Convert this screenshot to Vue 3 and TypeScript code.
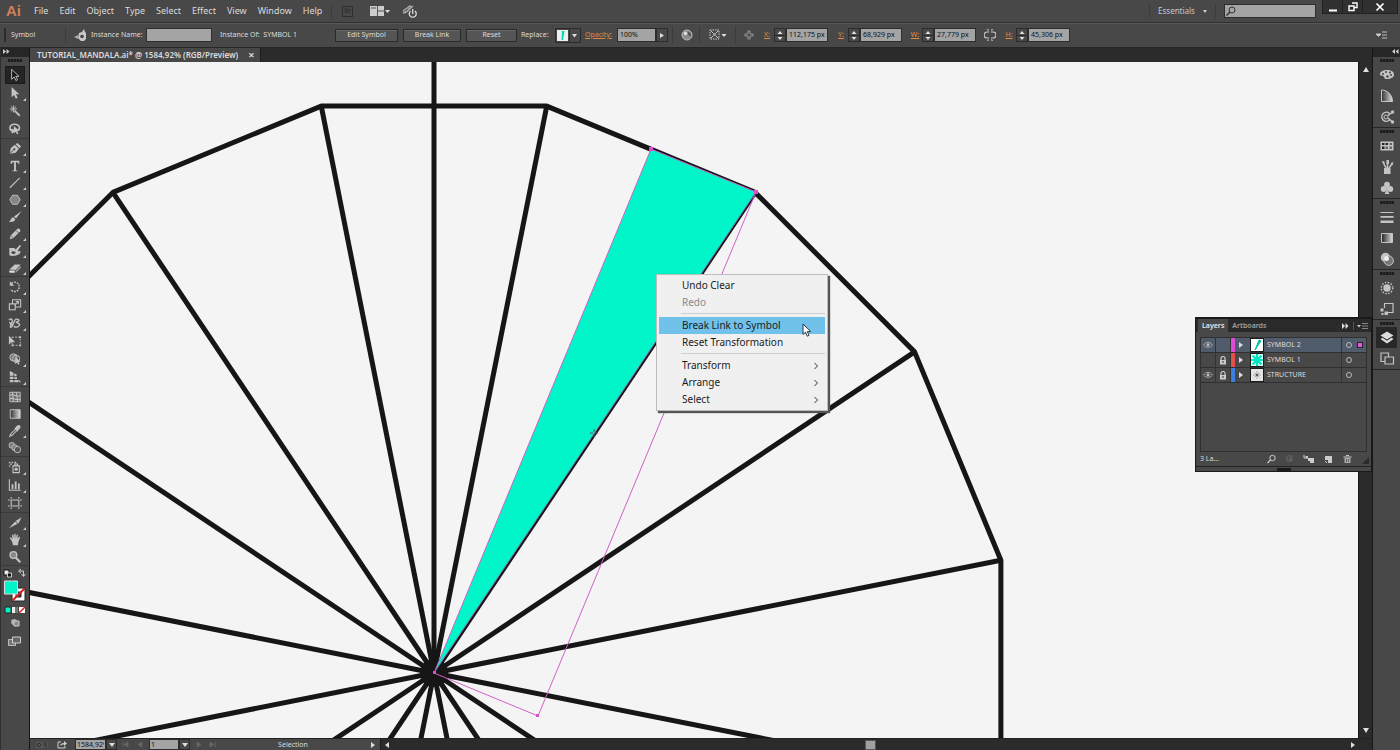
<script setup lang="ts">
import { ref } from 'vue'

interface Tool { name: string; art: string; more?: boolean }
interface Layer { name: string; color: string; visible: boolean; locked: boolean; selected: boolean; thumb: string }
interface Field { id: string; label: string; value: string }

const G = '#c4c4c4'
const s = (d: string, w = 1.2): string => `<path d="${d}" fill="none" stroke="${G}" stroke-width="${w}"/>`
const f = (d: string, c = G): string => `<path d="${d}" fill="${c}"/>`

const toolGroups: { roomy: boolean; tools: Tool[] }[] = [
  { roomy: true, tools: [
    { name: 'Selection', art: `<path d="M4 1.5v11l2.8-2.6 2 4 1.8-1-2-3.7h3.6z" fill="#151515" stroke="${G}" stroke-width="1"/>` },
    { name: 'Direct Selection', art: f('M4 1v11.500l2.700-2.500 2 4 2-1-2-3.800h3.800z'), more: true },
    { name: 'Magic Wand', art: s('M7.500 7.500l5.500 5.500', 2) + s('M6 1.500v8M2 5.500h8M3.200 2.700l5.600 5.600M8.800 2.700l-5.600 5.600', 1) },
    { name: 'Lasso', art: s('M5 10C1 9 1 3 6.500 2.500c6-.5 7.500 4 5 6.500M4 8.500c3-.5 3 2.500 0 3.500', 1.700) + f('M6.500 4.500v8l2-1.800 1.500 3 1.500-.800-1.400-2.800h2.700z') },
  ] },
  { roomy: false, tools: [
    { name: 'Pen', art: f('M2 13l1-6 4.500-4 4.500 4.500-3.500 4.500z') + f('M8.500 2.500l2-1.500 4 4-1.700 2z') + '<path d="M2.500 12.500l4-4" stroke="#444"/><circle cx="7" cy="8" r="1.200" fill="#444"/>', more: true },
    { name: 'Type', art: f('M3 2h9.500v3.500h-1c-.2-1.500-.7-2-2.700-2v8c0 1 .4 1.200 1.700 1.300v.7H5v-.7c1.300-.1 1.700-.3 1.700-1.300v-8c-2 0-2.500.5-2.700 2H3z'), more: true },
    { name: 'Line Segment', art: s('M2 13L13 2'), more: true },
    { name: 'Polygon', art: `<path d="M5 2.500h5.500l3 5-3 5H5l-3-5z" fill="#858585" stroke="${G}"/>`, more: true },
    { name: 'Paintbrush', art: f('M15 1L9 9.500 6.500 7.500z') + f('M5.500 8l2.500 2c0 3-3.500 3.700-7 3.200 2-.800 2-4.700 4.500-5.200z') },
    { name: 'Pencil', art: f('M2 13.500l1-4L10.500 2c1.500-1 4 1 3 2.800L6 12.300z') + '<path d="M3.500 9.500l2.200 2.200M9 4l2.500 2.500" stroke="#555"/>', more: true },
    { name: 'Blob Brush', art: f('M1.500 4.500h5.500l1.500 1.500 4.500-5 1.500 1-3.500 5v1c1 0 2-1 3 .5-1 4.500-9.500 5.500-12.500 4z') + '<path d="M3.500 9c2-2.500 4 .5 5-.5-.5 4-4 3-5 .5z" fill="#444"/>', more: true },
    { name: 'Eraser', art: f('M1.500 9.500L7.500 4h6.500l-5.500 6z') + f('M1.500 10.500h6v2.500h-5c-1 0-1.500-1.500-1-2.500z', '#ddd') + f('M8.500 10.500l5.500-5.500v3L8.500 13z', '#999'), more: true },
  ] },
  { roomy: true, tools: [
    { name: 'Rotate', art: `<path d="M4 3.500a5.200 5.200 0 1 1-1 7" fill="none" stroke="${G}" stroke-width="1.500" stroke-dasharray="2 1"/>` + f('M2 1.500v5h5z'), more: true },
    { name: 'Scale', art: s('M1.500 6.500h6.500v6.500H1.500zM5 6V2h9v8h-5.500M7 8.500l4.500-4.500M8.500 3.800h3v3'), more: true },
    { name: 'Width', art: s('M1 4.500c3-3 5 0 3 3.500s-2 3-1 4.500c3 0 3-9 6.500-9 3 0 4 2 0 3-2 1 5 1 3 4-1 2-4 2.500-6 1M1.500 7l4 4', 1.500), more: true },
    { name: 'Free Transform', art: `<path d="M4.500 3.500h9v9h-9z" fill="none" stroke="${G}" stroke-dasharray="2 1.500"/>` + f('M1 2v9.500l2.700-2.500 4.300.2z') + f('M12.500 2.500h2v2h-2zM12.500 11.500h2v2h-2zM4 11.500h2v2H4z') },
    { name: 'Shape Builder', art: `<circle cx="6" cy="6" r="4" fill="#777" stroke="${G}"/><circle cx="9" cy="7.500" r="4" fill="none" stroke="${G}"/>` + f('M8 5v8.500l2-1.800 1.400 2.300 1.400-.8-1.300-2.400H14z'), more: true },
    { name: 'Perspective Grid', art: f('M2 1l4 2v3.500H2zM2 7.500h4V10H2zM2 11h4v2.500H2zM7 3.500l2.500 1.500v2H7zM7 8h3v2H7zM7 11h3.500l1.500 2.500H7zM11 11h1.500l2 2.500H13z'), more: true },
  ] },
  { roomy: false, tools: [
    { name: 'Mesh', art: `<path d="M2 2.500h11.500v10.500H2z" fill="#666" stroke="${G}"/>` + s('M2 6c4-3 7 3 11.500 0M2 10c4-3 7 3 11.500 0M5.500 2.500c-2 4 2 7 0 10.500M10 2.500c-2 4 2 7 0 10.500') },
    { name: 'Gradient', art: `<defs><linearGradient id="g-tool"><stop offset="0" stop-color="#333"/><stop offset="1" stop-color="#ddd"/></linearGradient></defs><path d="M2.500 3h11v9.500h-11z" fill="url(#g-tool)" stroke="${G}"/>` },
    { name: 'Eyedropper', art: s('M2 13.500l1-2.500L8.500 5.500 10 7l-5.500 5.500z') + f('M7 4.500l1.500-.7C10 1.500 12 .5 13.500 1.800c1 1.500 0 3.200-2 4.700L11 8.500z'), more: true },
    { name: 'Blend', art: `<rect x="1.500" y="2" width="5.500" height="5.500" rx="1" fill="#777" stroke="${G}"/><circle cx="7.500" cy="7.500" r="3.300" fill="#777" stroke="${G}"/><circle cx="10.500" cy="9.500" r="3.500" fill="#555" stroke="${G}"/>` },
  ] },
  { roomy: true, tools: [
    { name: 'Symbol Sprayer', art: s('M5.500 6.500h7v7.500h-7zM7.500 4.500h3v2h-3z') + `<circle cx="9" cy="10.200" r="1.800" fill="${G}"/>` + f('M1 2h1.500v1.500H1zM4 2h1.500v1.500H4zM2.500 4H4v1.500H2.500zM7 2h2v1.500H7zM1 6h1.500v1.500H1z'), more: true },
    { name: 'Column Graph', art: s('M1.500 1.500v12H14') + f('M4 7h2v5.500H4zM7.500 4h2v8.500h-2zM11 6h2v6.500h-2z'), more: true },
    { name: 'Artboard', art: s('M3.500 4.500h8.500v6.500H3.500zM3.500 1v2M12 1v2M3.500 12.500v2M12 12.500v2M0 4.500h2M13.500 4.500h2M0 11h2M13.500 11h2') },
  ] },
  { roomy: false, tools: [
    { name: 'Slice', art: f('M1 13.500L8 6l2.500 2.500z') + f('M8.500 5.500L15 1.500 11.500 8.500z'), more: true },
    { name: 'Hand', art: f('M4 8.500L2 5.500c0-1 1-1.200 1.500-.5l1.500 2L4.500 2.500c0-1 1.500-1 1.600 0L6.800 6 7 1.500c0-1 1.500-1 1.500 0L8.600 6l1-3.800c.2-1 1.600-.7 1.400.3l-.7 4 1.700-2.200c.7-.7 1.700 0 1.200 1L11.500 10l-.5 3.500H5.500L5 11z'), more: true },
    { name: 'Zoom', art: `<circle cx="6" cy="5.500" r="3.700" fill="#888" stroke="${G}" stroke-width="1.500"/>` + s('M8.800 8.500L13.500 13.500', 2.500) },
  ] },
]

const dockGroups: Tool[][] = [
  [
    { name: 'Color', art: `<path d="M8 3c-4 0-7 1.700-7 4.300 0 2 2.500 1.200 4 2.200.800 1-.5 2.500 3 2.500 4 0 7-1.700 7-4.500S12 3 8 3z" fill="${G}"/><g fill="#444"><circle cx="4" cy="7" r="1"/><circle cx="7" cy="5" r="1"/><circle cx="11" cy="5.500" r="1"/><circle cx="12" cy="8" r="1"/><circle cx="8.500" cy="9.500" r="1.200"/></g>` },
    { name: 'Color Guide', art: '<defs><linearGradient id="g-guide"><stop offset="0" stop-color="#333"/><stop offset="1" stop-color="#ddd"/></linearGradient></defs><path d="M2.500 2v11.500h11C13.500 7 8.500 2 2.500 2z" fill="url(#g-guide)" stroke="#c4c4c4"/>' },
    { name: 'Kuler', art: s('M10.500 11a4.500 4.500 0 1 1 0-6.500M9 6.500l4-3M9 9l4 3.500', 1.500) + `<circle cx="7" cy="8" r="2" fill="none" stroke="${G}"/><circle cx="13.500" cy="3" r="1.700" fill="${G}"/><circle cx="13.500" cy="13" r="1.700" fill="${G}"/>` },
  ],
  [
    { name: 'Swatches', art: f('M1.500 3.500h13v9h-13z') + '<path d="M3 5h2.500v2H3zM6.500 5H9v2H6.500zM3 8.500h2.500v2.500H3z" fill="#222"/><path d="M10.500 5H13v2h-2.500zM6.500 8.500H9v2.500H6.500zM10.500 8.500H13v2.500h-2.500z" fill="#666"/>' },
    { name: 'Brushes', art: f('M5 9h6.500v6H5z') + s('M7 9L4 3M8.500 9V3M10 9l3-4', 1.500) + f('M2.500 2l3 .5v3zM7.500 1h2.500v4H7.500zM11.500 4l3-1-1 3.500z') },
    { name: 'Symbols', art: `<circle cx="8" cy="4.700" r="2.900" fill="${G}"/><circle cx="4.700" cy="9" r="2.900" fill="${G}"/><circle cx="11.300" cy="9" r="2.900" fill="${G}"/>` + f('M7.200 6h1.600v5l1.700 3h-5l1.700-3z') },
  ],
  [
    { name: 'Stroke', art: f('M1.500 3h13v1h-13zM1.500 7h13v1.700h-13zM1.500 11.500h13V14h-13z') },
    { name: 'Gradient', art: `<defs><linearGradient id="g-dock"><stop offset="0" stop-color="#222"/><stop offset="1" stop-color="#ddd"/></linearGradient></defs><path d="M2.500 3.500h11v9h-11z" fill="url(#g-dock)" stroke="${G}"/>` },
    { name: 'Transparency', art: `<circle cx="6.500" cy="6.500" r="4.700" fill="${G}"/><circle cx="9.700" cy="9.700" r="4.700" fill="#777" stroke="${G}"/><circle cx="7.500" cy="7.500" r="2.500" fill="#eee"/>` },
  ],
  [
    { name: 'Appearance', art: `<circle cx="8" cy="8" r="3.700" fill="${G}"/><circle cx="8" cy="8" r="5.700" fill="none" stroke="${G}" stroke-width="1.400" stroke-dasharray="1.500 1.500"/>` },
    { name: 'Graphic Styles', art: s('M5.500 7V2.500H14v9H9') + f('M1.500 7.500h3v3h-3zM5.500 10.500h3.500V14H5.500zM2.500 12h2v2h-2z') },
  ],
  [
    { name: 'Layers', art: f('M8 1.500l6.500 4L8 9.500l-6.500-4z', '#ddd') + f('M1.500 9l2-1.200L8 10.700l4.500-2.900 2 1.200L8 13.500z', '#ddd') },
    { name: 'Artboards', art: s('M2 2h7.500v8.500H2z') + '<path d="M6 6h8.500v7H6z" fill="#484848" stroke="#c4c4c4" stroke-width="1.200"/>' },
  ],
]

const menus = ['File', 'Edit', 'Object', 'Type', 'Select', 'Effect', 'View', 'Window', 'Help']
const fields = ref<Field[]>([
  { id: 'x', label: 'X:', value: '112,175 px' },
  { id: 'y', label: 'Y:', value: '68,929 px' },
  { id: 'w', label: 'W:', value: '27,779 px' },
  { id: 'h', label: 'H:', value: '45,306 px' },
])
const instanceName = ref('')
const opacity = ref('100%')
const search = ref('')
const zoomLevel = ref('1584,92%')
const artboard = ref('1')

const layers = ref<Layer[]>([
  { name: 'SYMBOL 2', color: '#e04bd8', visible: true, locked: false, selected: true, thumb: '<path d="M8 1l2 .800L4 11z" fill="#00b894" stroke="#00c9a4"/>' },
  { name: 'SYMBOL 1', color: '#e2504a', visible: false, locked: true, selected: false, thumb: '<path d="M0 0h12v12H0z" fill="#d8fff6"/><path d="M6 0v12M0 6h12M1.500 1.500l9 9M10.500 1.500l-9 9" stroke="#00e6c0" stroke-width="2.200"/>' },
  { name: 'STRUCTURE', color: '#3b7fe0', visible: true, locked: true, selected: false, thumb: '<path d="M0 0h12v12H0z" fill="#e4e4e4"/><path d="M6 2v8M2 6h8M3.500 3.500l5 5M8.500 3.500l-5 5" stroke="#999" stroke-width=".7"/><circle cx="6" cy="6" r="1.200" fill="#555"/>' },
])

const cx = 434
const cy = 673
const radius = 578
const vertices = Array.from({ length: 16 }, (_, i) => {
  const a = ((11.25 + 22.5 * i) * Math.PI) / 180
  return { x: cx + radius * Math.cos(a), y: cy - radius * Math.sin(a) }
})
const outline = vertices.map((v) => `${v.x},${v.y}`).join(' ')
</script>

<template>
  <div class="app">
    <header class="menubar">
      <span class="logo">Ai</span>
      <nav class="menus"><button v-for="m in menus" :key="m" type="button">{{ m }}</button></nav>
      <span class="rule bridge-rule"></span>
      <button class="bridge" type="button">Br</button>
      <button class="arrange" type="button" aria-label="Arrange documents">
        <svg width="20" height="12" viewBox="0 0 20 12"><path d="M0 1h14v10H0z" fill="#ccc" /><path d="M7.500 1v10M8 6h6M1 3h5" stroke="#555" /><path d="M15 5h5l-2.500 3z" fill="#ddd" /></svg>
      </button>
      <button class="gpu" type="button" aria-label="GPU preview">
        <svg width="16" height="14" viewBox="0 0 16 14"><path d="M1 7l7-5 1 1-3 3M3 9l8-7M1 9l5-2" stroke="#aaa" stroke-width="1.500" fill="none" /><path d="M8.500 7a3.500 3.500 0 1 0 4.500 0M10.700 5v5" stroke="#ddd" stroke-width="1.300" fill="none" /></svg>
      </button>
      <span class="grow"></span>
      <span class="rule"></span>
      <button class="essentials" type="button">Essentials <i></i></button>
      <span class="rule"></span>
      <label class="search">
        <svg width="12" height="12" viewBox="0 0 12 12"><circle cx="7" cy="5" r="3" fill="none" stroke="#333" /><path d="M5 7l-3.500 3.500" stroke="#333" stroke-width="1.500" /></svg>
        <input v-model="search" type="text" aria-label="Search" />
      </label>
      <div class="window-buttons">
        <button type="button" aria-label="Minimize"><svg width="10" height="10" viewBox="0 0 10 10"><path d="M1 8.500h8" stroke="#fff" stroke-width="2" /></svg></button>
        <button type="button" aria-label="Restore"><svg width="10" height="10" viewBox="0 0 10 10"><path d="M4 1h5v4.500H6.500M1 4h5v4.500H1z" stroke="#fff" stroke-width="1.400" fill="none" /></svg></button>
        <button class="close" type="button" aria-label="Close"><svg width="10" height="10" viewBox="0 0 10 10"><path d="M1.500 1.500l7 7M8.500 1.500l-7 7" stroke="#fff" stroke-width="1.700" /></svg></button>
      </div>
    </header>

    <section class="controlbar">
      <span class="bar-grip"></span>
      <span class="kind">Symbol</span>
      <span class="rule"></span>
      <svg class="symbol-icon" width="14" height="12" viewBox="0 0 14 12"><path d="M5 4l3-1 2-3 1 3 1 1v6l-2 2H7L4 9z" fill="#c8c8c8" /><circle cx="8" cy="7.500" r="1.800" fill="#444" /><path d="M0 8l4-2v4z" fill="#aaa" /></svg>
      <label class="name-label" for="instance">Instance Name:</label>
      <input id="instance" v-model="instanceName" class="instance" type="text" />
      <span class="instance-of">Instance Of:&nbsp; SYMBOL 1</span>
      <div class="actions">
        <button type="button">Edit Symbol</button>
        <button type="button">Break Link</button>
        <button type="button">Reset</button>
      </div>
      <span class="replace-label">Replace:</span>
      <button class="replace" type="button" aria-label="Replace symbol">
        <svg width="24" height="13" viewBox="0 0 24 13"><path d="M1 1h11v11H1z" fill="#eee" /><path d="M6 2h2.500L7 11H5.500z" fill="#00d9b0" /><path d="M13.500 0v13" stroke="#2b2b2b" /><path d="M16 5h5l-2.500 3.500z" fill="#ddd" /></svg>
      </button>
      <label class="hot" for="opacity">Opacity:</label>
      <span class="stepper opacity">
        <input id="opacity" v-model="opacity" type="text" />
        <button type="button" aria-label="Opacity slider"><svg width="8" height="11" viewBox="0 0 8 11"><path d="M2 3l4 2.500L2 8z" fill="#ddd" /></svg></button>
      </span>
      <span class="rule"></span>
      <svg class="ball" width="12" height="12" viewBox="0 0 12 12"><circle cx="6" cy="6" r="5" fill="#8c8c8c" stroke="#bbb" /><path d="M6.500 2.500a4 4 0 0 1 3.500 5L7 6z" fill="#555" /><circle cx="4.500" cy="4.500" r="1.800" fill="#ddd" /></svg>
      <span class="rule"></span>
      <svg class="align" width="18" height="12" viewBox="0 0 18 12"><path d="M1 1h9v9H1z" fill="none" stroke="#ccc" stroke-dasharray="1.500 1" /><path d="M4 4h3v3H4z" fill="#999" /><path d="M2 2l2 2M9 2L7 4M2 9l2-2M9 9L7 7" stroke="#ccc" /><path d="M12.500 5h5L15 8z" fill="#ddd" /></svg>
      <span class="rule"></span>
      <svg class="origin" width="10" height="10" viewBox="0 0 10 10"><path d="M4 1h2v3h3v2H6v3H4V6H1V4h3z" fill="none" stroke="#aaa" stroke-width=".8" /></svg>
      <template v-for="item in fields" :key="item.id">
        <svg v-if="item.id === 'h'" class="link" width="12" height="12" viewBox="0 0 12 12"><path d="M5 3H3a2.500 2.500 0 0 0 0 6h2M7 3h2a2.500 2.500 0 0 1 0 6H7M3.500 0l1 1.500M8.500 0l-1 1.500M3.500 12l1-1.500M8.500 12l-1-1.500" fill="none" stroke="#ccc" stroke-width="1.200" /></svg>
        <label class="hot coord" :for="item.id">{{ item.label }}</label>
        <span class="stepper">
          <button type="button" :aria-label="'Step ' + item.label"><svg width="10" height="11" viewBox="0 0 10 11"><path d="M2.500 4L5 1l2.500 3zM2.500 7h5L5 10z" fill="#ddd" /><path d="M0 5.500h10" stroke="#2d2d2d" /></svg></button>
          <input :id="item.id" v-model="item.value" type="text" />
        </span>
      </template>
      <span class="grow"></span>
      <button class="bar-menu" type="button" aria-label="Panel menu"><svg width="12" height="10" viewBox="0 0 12 10"><path d="M0 4h5L2.500 6.500zM6 2h5M6 5h5M6 8h5" fill="#ccc" stroke="#ccc" stroke-width=".9" /></svg></button>
    </section>

    <div class="workspace">
      <aside class="tools">
        <div class="tools-head"><svg width="7" height="5" viewBox="0 0 7 5"><path d="M0 0l3 2.500L0 5zM3.500 0l3 2.500L3.500 5z" fill="#ccc" /></svg></div>
        <div class="grip"></div>
        <div v-for="(group, gi) in toolGroups" :key="gi" class="tool-group" :class="{ roomy: group.roomy }">
          <button v-for="(t, ti) in group.tools" :key="t.name" type="button" class="tool" :class="{ more: t.more, on: gi === 0 && ti === 0 }" :aria-label="t.name">
            <svg width="14" height="14" viewBox="0 0 15.500 15.500" v-html="t.art"></svg>
          </button>
        </div>
        <div class="paint">
          <svg width="26" height="84" viewBox="0 2 26 84">
            <path d="M2 6h5v5H2z" fill="#eee" stroke="#111" /><path d="M5.500 9h4v4h-4z" fill="#111" stroke="#ccc" />
            <path d="M17 7h4.500v5M19 5l-2.500 2L19 9M19.500 10l2 2.500 2-2.500" fill="none" stroke="#ccc" />
            <path d="M10 24h13v13H10z" fill="#fff" stroke="#222" /><path d="M14 28h5v5h-5z" fill="#444" stroke="#222" /><path d="M10.500 36.500l12-12" stroke="#e01b24" stroke-width="2" />
            <path d="M2.500 17h13v13h-13z" fill="#00f5c8" stroke="#ddd" />
            <path d="M3 43h6v6H3z" fill="#00f5c8" stroke="#222" /><path d="M10 43h3v6h-3z" fill="#eee" /><path d="M13 43h3v6h-3z" fill="#777" /><path d="M17 43h6v6h-6z" fill="#fff" /><path d="M17 49l6-6" stroke="#e01b24" stroke-width="1.500" />
            <circle cx="12" cy="58" r="3" fill="#aaa" /><path d="M12 57h5v5h-5z" fill="#888" stroke="#ccc" />
            <path d="M6.500 75.500h7v6h-7z" fill="#777" stroke="#bbb" /><path d="M10.500 73h8v6h-8z" fill="#666" stroke="#ccc" />
          </svg>
        </div>
      </aside>

      <main class="document">
        <div class="tabs">
          <div class="tab"><span>TUTORIAL_MANDALA.ai* @ 1584,92% (RGB/Preview)</span><button type="button" aria-label="Close document">×</button></div>
        </div>
        <div class="canvas">
          <svg class="art" viewBox="30 62 1328 676" preserveAspectRatio="xMinYMin slice">
            <g stroke="#161616" stroke-width="5" fill="none" stroke-linejoin="bevel">
              <polygon :points="outline" />
              <path d="M434 62V673" />
              <line v-for="(v, i) in vertices" :key="i" :x1="cx" :y1="cy" :x2="v.x" :y2="v.y" />
            </g>
            <circle cx="434" cy="673" r="14" fill="#161616" />
            <path d="M651 149L756 192L434 673z" fill="#00f5c8" />
            <path d="M651 149L756 192L538 716L434 673z" fill="none" stroke="#d160c8" stroke-width="1" />
            <path d="M756 192L434 673" stroke="#8a5fa8" stroke-width="1" />
            <path d="M649 147h4v4h-4zM754 190h4v4h-4zM536 714h3v3h-3zM433 671h3v3h-3z" fill="#d94fd0" />
            <path d="M590 433h8M594 429v8" stroke="#555" stroke-width="1" stroke-dasharray="3 2" />
          </svg>
          <div class="context" role="menu">
            <button type="button" role="menuitem">Undo Clear</button>
            <button type="button" role="menuitem" disabled>Redo</button>
            <hr />
            <button type="button" role="menuitem" class="hover">Break Link to Symbol</button>
            <button type="button" role="menuitem">Reset Transformation</button>
            <hr />
            <button v-for="n in ['Transform', 'Arrange', 'Select']" :key="n" type="button" role="menuitem">
              {{ n }}<svg width="6" height="8" viewBox="0 0 6 8"><path d="M1.500 1L4.500 4L1.500 7" fill="none" stroke="#333" /></svg>
            </button>
            <svg class="cursor" width="10" height="15" viewBox="0 0 10 15"><path d="M1 1v10.500l2.500-2.300 1.700 4 1.800-.8-1.700-3.800h3.500z" fill="#fff" stroke="#223" stroke-width=".9" /></svg>
          </div>
        </div>
        <div class="vscroll">
          <button type="button" aria-label="Scroll up"><svg width="8" height="6" viewBox="0 0 8 6"><path d="M1 6l3-5 3 5z" fill="#ddd" /></svg></button>
          <button type="button" aria-label="Scroll down"><svg width="8" height="6" viewBox="0 0 8 6"><path d="M1 0l3 5 3-5z" fill="#ddd" /></svg></button>
        </div>
        <footer class="status">
          <div class="status-left">
            <svg class="sync" width="14" height="8" viewBox="0 0 14 8"><path d="M1 1h12v6H1z" fill="#555" /><circle cx="4" cy="4" r="1.700" fill="none" stroke="#333" /><path d="M8 2h4M8 5l3-2v4" stroke="#333" fill="none" /></svg>
            <svg class="share" width="10" height="9" viewBox="0 0 10 9"><path d="M4 2H1v6h7V6" fill="none" stroke="#ccc" /><path d="M3 6c0-2 2-3 4-3V1l3 2.500L7 6V4.500C5 4.500 4 5 3 6z" fill="#ccc" /></svg>
            <input v-model="zoomLevel" class="zoom" type="text" aria-label="Zoom level" />
            <button class="drop" type="button" aria-label="Zoom presets"><i></i></button>
            <span class="dim"><svg width="22" height="7" viewBox="0 0 22 7"><path d="M1 1v5M6 1L2 3.500 6 6zM20 1l-4 2.500L20 6z" fill="#666" stroke="#666" stroke-width=".8" /></svg></span>
            <input v-model="artboard" class="board" type="text" aria-label="Artboard" />
            <button class="drop" type="button" aria-label="Artboard list"><i></i></button>
            <span class="dim"><svg width="22" height="7" viewBox="0 0 22 7"><path d="M2 1l4 2.500L2 6zM15 1l4 2.500L15 6zM20.500 1v5" fill="#666" stroke="#666" stroke-width=".8" /></svg></span>
            <span class="mode">Selection</span>
            <svg class="mode-arrow" width="6" height="8" viewBox="0 0 6 8"><path d="M1 1l4 3-4 3z" fill="#ddd" /></svg>
          </div>
          <div class="hscroll">
            <svg width="6" height="8" viewBox="0 0 6 8"><path d="M5 1L1 4l4 3z" fill="#ddd" /></svg>
            <span class="thumb"></span>
            <svg width="6" height="8" viewBox="0 0 6 8"><path d="M1 1l4 3-4 3z" fill="#ddd" /></svg>
          </div>
        </footer>
      </main>

      <aside class="dock">
        <div class="dock-head"><svg width="7" height="5" viewBox="0 0 7 5"><path d="M3 0L0 2.500 3 5zM6.500 0l-3 2.500 3 2.500z" fill="#ccc" /></svg></div>
        <div v-for="(group, gi) in dockGroups" :key="gi" class="dock-group">
          <div class="grip"></div>
          <button v-for="d in group" :key="d.name" type="button" :class="{ on: d.name === 'Layers' }" :aria-label="d.name">
            <svg width="16" height="16" viewBox="0 0 16 16" v-html="d.art"></svg>
          </button>
        </div>
      </aside>

      <section class="layers">
        <div class="layers-tabs">
          <button class="current" type="button">Layers</button>
          <button type="button">Artboards</button>
          <span class="grow"></span>
          <svg width="28" height="8" viewBox="0 0 28 8"><path d="M1 1l3 3-3 3zM4.500 1l3 3-3 3z" fill="#ddd" /><path d="M12.500 0v8" stroke="#555" /><path d="M16 3h4l-2 2.500z" fill="#ccc" /><path d="M21 1.500h6M21 4h6M21 6.500h6" stroke="#888" /></svg>
        </div>
        <ul class="layer-list">
          <li v-for="l in layers" :key="l.name" :class="{ selected: l.selected }">
            <button class="eye" type="button" :aria-label="'Visibility of ' + l.name" @click="l.visible = !l.visible"><svg v-if="l.visible" width="10" height="8" viewBox="0 0 10 8"><path d="M.5 4C3 .5 7 .5 9.500 4 7 7 3 7 .5 4z" fill="none" stroke="#aaa" /><circle cx="5" cy="3.800" r="1.500" fill="#bbb" /></svg></button>
            <button class="lock" type="button" :aria-label="'Lock ' + l.name" @click="l.locked = !l.locked"><svg v-if="l.locked" width="8" height="9" viewBox="0 0 8 9"><path d="M2 4V2.500a2 2 0 0 1 4 0V4" fill="none" stroke="#ccc" stroke-width="1.200" /><path d="M1 4h6v4.500H1z" fill="#ccc" /><path d="M4 5v2" stroke="#333" /></svg></button>
            <span class="swatch" :style="{ background: l.color }"></span>
            <svg class="expand" width="6" height="8" viewBox="0 0 6 8"><path d="M1 1l4 3-4 3z" fill="#ddd" /></svg>
            <svg class="thumbnail" width="12" height="12" viewBox="0 0 12 12" v-html="l.thumb"></svg>
            <span class="layer-name">{{ l.name }}</span>
            <span class="target"><i></i><b v-if="l.selected"></b></span>
          </li>
        </ul>
        <div class="layers-foot">
          <span>3 La...</span>
          <span class="grow"></span>
          <svg width="105" height="10" viewBox="0 0 105 10">
            <circle cx="8.500" cy="4" r="2.700" fill="none" stroke="#ccc" /><path d="M6.500 6L3.500 9" stroke="#ccc" stroke-width="1.300" />
            <path d="M23 2h5v5h-5z" fill="none" stroke="#666" /><path d="M25 4h2v2h-2z" fill="#666" />
            <path d="M41 2h3v3l-1.500-1M44 4h6v5h-4V7h-2z" fill="#ccc" /><path d="M40 1v3h3" stroke="#ccc" fill="none" />
            <path d="M61 2h7v7h-4V6h-3z" fill="#ccc" /><path d="M61 7l2 2" stroke="#ccc" />
            <path d="M79.500 3h8M82 1.500h3" stroke="#ccc" /><path d="M80.500 4h6v5h-6z" fill="#aaa" /><path d="M82.500 5v3M84.500 5v3" stroke="#444" stroke-width=".7" />
            <path d="M105 3v7h-7z" fill="#2b2b2b" />
          </svg>
        </div>
        <div class="layers-drag"></div>
      </section>
    </div>
  </div>
</template>

<style>
html, body { margin: 0; background: #2b2b2b; }
</style>

<style scoped>
.app { height: 100vh; display: flex; flex-direction: column; overflow: hidden; background: #484848; color: #dcdcdc; font: 7px/10px "Noto Sans", "Liberation Sans", sans-serif; }
.app *, .app *::before, .app *::after { box-sizing: border-box; }
button { margin: 0; padding: 0; border: 0; background: none; color: inherit; font: inherit; display: flex; align-items: center; justify-content: center; }
input { margin: 0; padding: 0 2px; border: 1px solid #2d2d2d; border-radius: 0; background: #a4a4a4; color: #111; font: inherit; min-width: 0; outline: 0; }
svg { display: block; flex: none; }
.grow { flex: 1; }
.rule { width: 1px; align-self: stretch; margin: 4px 0; background: #3b3b3b; flex: none; }

.menubar { height: 22px; flex: none; display: flex; align-items: center; font-size: 9px; line-height: 12px; color: #dadada; }
.logo { width: 14px; margin: 0 14px 0 6px; color: #d08058; font: bold 15px/18px "Liberation Sans", sans-serif; }
.menus { display: flex; gap: 11px; }
.bridge-rule { margin-left: 9px; }
.bridge { width: 11px; height: 11px; margin: 0 17px 0 10px; border: 1px solid #2f2f2f; color: #2a2a2a; font-size: 7px; line-height: 8px; }
.gpu { margin-left: 12px; }
.essentials { width: 65px; gap: 8px; color: #c8c8c8; font-size: 8px; }
.essentials i { border: 2px solid transparent; border-top: 3px solid #ccc; border-bottom: 0; }
.search { width: 92px; height: 14px; margin: 0 6px 0 8px; display: flex; align-items: center; background: #a4a4a4; border: 1px solid #2d2d2d; }
.search input { flex: 1; border: 0; background: none; height: 12px; }
.window-buttons { display: flex; align-self: flex-start; height: 14px; margin-right: 2px; border: 1px solid #222; border-top: 0; background: #303030; }
.window-buttons button { width: 20px; border-right: 1px solid #1e1e1e; }
.window-buttons .close { width: 34px; border: 0; }

.controlbar { height: 26px; flex: none; display: flex; align-items: center; border-top: 1px solid #303030; border-bottom: 1px solid #262626; box-shadow: inset 0 1px #585858; }
.bar-grip { width: 2px; height: 14px; margin: 0 5px 0 4px; background: #2c2c2c; }
.kind { width: 54px; }
.symbol-icon { margin: 0 3px 0 8px; }
.name-label { width: 55px; white-space: nowrap; }
.instance { width: 66px; height: 14px; margin: 0 8px 0 0; }
.instance-of { width: 115px; white-space: nowrap; }
.actions { display: flex; gap: 5px; margin-right: 4px; }
.actions button { width: 63px; height: 13px; border: 1px solid #2a2a2a; box-shadow: inset 0 1px #686868; background: #555; }
.actions button:nth-child(2) { width: 58px; }
.actions button:last-child { width: 51px; }
.replace-label { width: 34px; white-space: nowrap; }
.replace { border: 1px solid #2b2b2b; margin-right: 4px; height: 15px; }
.hot { color: #e08a40; text-decoration: underline; white-space: nowrap; }
.hot[for="opacity"] { width: 32px; }
.stepper { display: flex; height: 14px; }
.stepper button { border: 1px solid #2d2d2d; width: 12px; overflow: hidden; }
.stepper input { width: 42px; }
.stepper.opacity input { width: 39px; }
.stepper.opacity { margin-right: 4px; }
.ball { margin: 0 6px 0 8px; }
.align { margin: 0 8px 0 9px; }
.origin { margin: 0 0 0 8px; }
.coord { width: 14px; margin-left: 6px; text-align: center; }
.link { margin-left: 8px; }
.bar-menu { margin-right: 12px; }

.workspace { position: relative; flex: 1; min-height: 0; display: flex; }
.tools { width: 30px; flex: none; background: #484848; border-right: 1px solid #161616; border-left: 1px solid #303030; display: flex; flex-direction: column; align-items: center; }
.tools-head, .dock-head { width: 100%; height: 9px; flex: none; background: #262626; padding: 1px 1px; }
.tools-head { padding-left: 2px; }
.grip { width: 14px; height: 3px; margin: 2px 0; background: repeating-linear-gradient(90deg, #1c1c1c 0 2px, #303030 2px 3px); flex: none; }
.tool-group { width: 100%; display: grid; grid-auto-rows: 17px; justify-items: center; padding-top: 1px; border-top: 1px solid #3a3a3a; }
.tool-group.roomy { grid-auto-rows: 18px; }
.tool-group:nth-of-type(3) { border-top-color: transparent; }
.tool { position: relative; width: 22px; }
.tool.on { width: 20px; background: #242424; border: 1px solid #1a1a1a; }
.tool.more::after { content: ""; position: absolute; right: 0; bottom: 1px; border-left: 3px solid transparent; border-bottom: 3px solid #ccc; }
.paint { border-top: 1px solid #3a3a3a; }

.document { flex: 1; min-width: 0; display: grid; grid-template: 14px 1fr 12px / 1fr 14px; }
.tabs { grid-column: 1 / -1; background: #2b2b2b; display: flex; }
.tab { display: flex; align-items: center; gap: 10px; padding: 0 5px 0 7px; background: #484848; font-size: 8px; font-weight: 600; border-right: 1px solid #1c1c1c; white-space: nowrap; }
.tab button { font-size: 11px; }
.canvas { position: relative; background: #f4f4f4; overflow: hidden; }
.art { width: 100%; height: 100%; }
.vscroll { background: #2b2b2b; display: flex; flex-direction: column; align-items: center; justify-content: space-between; padding: 4px 0; border-left: 1px solid #161616; }

.context { position: absolute; left: 626px; top: 212px; width: 172px; padding: 2px 2px; background: #f0f0f0; border: 1px solid #bcbcbc; box-shadow: 2px 2px 1px #555; color: #1b1b1b; font-size: 10px; line-height: 17px; }
.context button { width: 100%; height: 17px; justify-content: space-between; padding: 0 6px 0 23px; white-space: nowrap; }
.context button:disabled { color: #8a8a8a; }
.context .hover { background: #70c2eb; }
.context hr { margin: 2px 0 3px 22px; border: 0; border-top: 1px solid #cfcfcf; }
.cursor { position: absolute; left: 145px; top: 48px; }

.status { grid-column: 1 / -1; display: flex; background: #484848; border-top: 1px solid #222; }
.status-left { width: 351px; flex: none; display: flex; align-items: center; border-right: 1px solid #1c1c1c; }
.sync { margin: 0 8px 0 5px; }
.share { margin-right: 8px; }
.status input { height: 11px; line-height: 9px; padding: 0 1px; }
.zoom { width: 31px; }
.board { width: 30px; }
.drop { width: 11px; height: 11px; border: 1px solid #2b2b2b; }
.drop i { border: 3px solid transparent; border-top: 4px solid #ddd; border-bottom: 0; }
.dim { width: 32px; display: flex; justify-content: center; }
.mode { flex: 1; text-align: center; padding-right: 6px; }
.mode-arrow { margin-right: 4px; }
.hscroll { flex: 1; display: flex; align-items: center; justify-content: space-between; background: #2b2b2b; padding: 0 16px 0 3px; }
.thumb { width: 11px; height: 10px; background: #a0a0a0; border: 1px solid #555; }

.dock { width: 28px; flex: none; background: #484848; border-left: 1px solid #161616; }
.dock-head { display: flex; justify-content: flex-end; }
.dock-group { display: grid; justify-items: center; grid-template-rows: 7px; grid-auto-rows: 21px; border-bottom: 1px solid #262626; }
.dock-group button { width: 21px; }
.dock-group button.on { background: #282828; }

.layers { position: absolute; right: 28px; top: 269px; width: 177px; padding: 2px; background: #484848; border: 1px solid #1a1a1a; border-top-width: 2px; }
.layers-tabs { height: 13px; margin: -2px -2px 5px; padding: 0 2px 0 2px; background: #2a2a2a; display: flex; align-items: center; }
.layers-tabs button { height: 13px; padding: 0 4px; color: #a0a0a0; font-weight: 600; }
.layers-tabs .current { background: #484848; color: #e8e8e8; }
.layer-list { list-style: none; margin: 0 2px; padding: 0; height: 115px; border: 1px solid #303030; }
.layer-list li { height: 15px; display: flex; align-items: center; border-bottom: 1px solid #2f2f2f; }
.layer-list .selected { background: #505c6c; }
.eye, .lock { width: 15px; height: 14px; border-right: 1px solid #333; }
.swatch { width: 4px; height: 14px; }
.expand { margin: 0 7px 0 3px; }
.thumbnail { background: #fff; outline: 1px solid #1c1c1c; }
.layer-name { flex: 1; padding-left: 4px; }
.target { width: 25px; height: 14px; padding-left: 4px; border-left: 1px solid #333; display: flex; align-items: center; gap: 5px; }
.target i { width: 6px; height: 6px; border: 1px solid #bbb; border-radius: 50%; }
.target b { width: 6px; height: 6px; background: #e85be0; border: 1px solid #222; }
.layers-foot { height: 14px; display: flex; align-items: center; padding-left: 2px; }
.layers-drag { height: 5px; margin: 0 -2px -2px; border-top: 1px solid #222; background: linear-gradient(#1a1a1a, #1a1a1a) center / 14px 3px no-repeat; }
</style>
